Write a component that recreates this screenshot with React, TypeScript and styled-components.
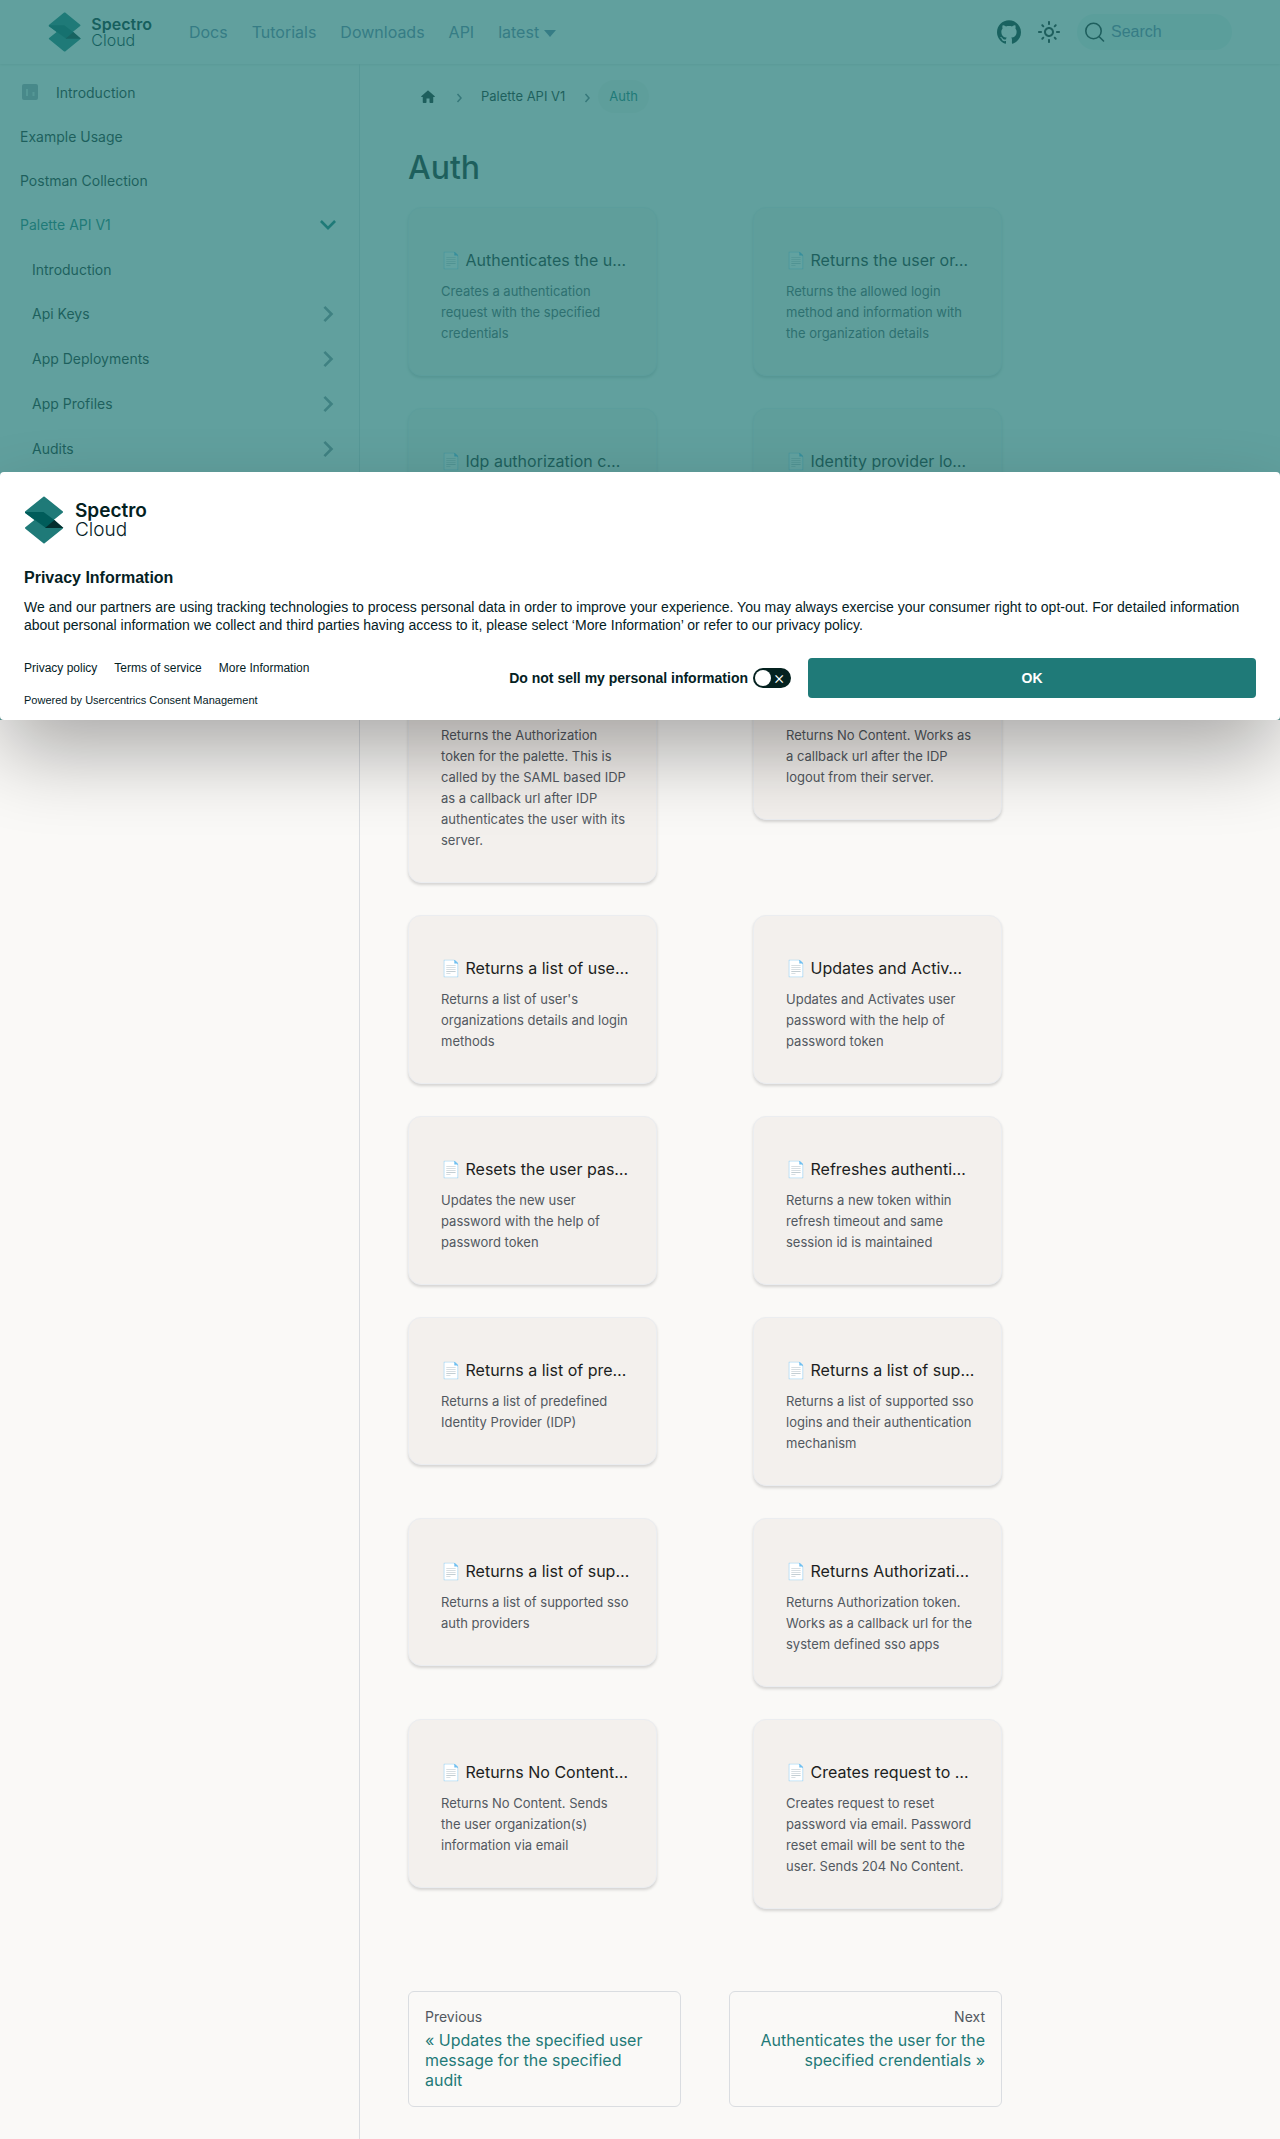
import React from "react";
import styled, { createGlobalStyle } from "styled-components";

const GlobalStyle = createGlobalStyle`
  *, *::before, *::after { box-sizing: border-box; }
  body {
    margin: 0;
    background: #faf9f7;
    color: #1c1e21;
    font-family: Inter, "Open Sans", "Liberation Sans", sans-serif;
    font-size: 16px;
  }
  a { color: inherit; text-decoration: none; }
  h1, h2, p, ul, ol { margin: 0; padding: 0; }
  ul, ol { list-style: none; }
  button { font: inherit; color: inherit; border: 0; background: none; padding: 0; cursor: pointer; }
`;

const Page = styled.div`
  position: relative;
  display: flex;
  flex-direction: column;
`;

const Navbar = styled.header`
  display: flex;
  align-items: center;
  height: 64px;
  padding: 0 48px;
  box-shadow: 0 1px 2px rgba(0, 0, 0, 0.1);
`;

const NavLinks = styled.nav`
  display: flex;
  flex: 1;
  gap: 24px;
  margin-left: 37px;
  color: #6b80a4;
`;

const Dropdown = styled.button`
  display: flex;
  align-items: center;
  gap: 5px;
  &::after {
    content: "";
    margin-top: 3px;
    border: 6px solid transparent;
    border-top: 7px solid currentColor;
    border-bottom: 0;
  }
`;

const NavTools = styled.div`
  display: flex;
  align-items: center;
  gap: 16px;
`;

const IconLink = styled.a`
  display: flex;
`;

const IconButton = styled.button`
  display: flex;
`;

const SearchBox = styled.label`
  display: flex;
  align-items: center;
  gap: 6px;
  width: 155px;
  height: 36px;
  padding: 0 8px;
  border-radius: 18px;
  background: #e6f0ee;
`;

const SearchInput = styled.input`
  flex: 1;
  min-width: 0;
  padding: 0;
  border: 0;
  outline: 0;
  background: none;
  font: 16px "Liberation Sans", Arial, sans-serif;
  &::placeholder { color: #6b80a4; opacity: 1; }
`;

const Brand = styled.a<{ $size: "small" | "large" }>`
  display: flex;
  align-items: center;
  gap: ${(p) => (p.$size === "large" ? 11 : 10)}px;
  color: #04211f;
  font-family: Inter, "Open Sans", sans-serif;
  font-size: ${(p) => (p.$size === "large" ? 19 : 16)}px;
  line-height: ${(p) => (p.$size === "large" ? 19 : 16)}px;
  svg { height: ${(p) => (p.$size === "large" ? 48 : 40)}px; width: auto; }
`;

const BrandText = styled.span`
  display: flex;
  flex-direction: column;
  font-weight: 300;
  strong { font-weight: 600; }
`;

const Body = styled.div`
  display: flex;
`;

const Sidebar = styled.nav`
  flex: 0 0 360px;
  padding: 8px;
  border-right: 1px solid #dadde1;
  font-size: 14px;
`;

const SideItem = styled.li<{ $nested?: boolean }>`
  margin-bottom: 4px;
  padding-left: ${(p) => (p.$nested ? 12 : 0)}px;
`;

const SideLink = styled.a<{ $category?: boolean; $active?: boolean }>`
  display: flex;
  align-items: center;
  justify-content: ${(p) => (p.$category ? "space-between" : "flex-start")};
  gap: 16px;
  height: ${(p) => (p.$category ? 41 : 40)}px;
  padding: 0 7px 0 12px;
  color: ${(p) => (p.$active ? "#1f7a78" : "#1c1e21")};
`;

const Main = styled.main`
  flex: 1;
  min-width: 0;
  padding: 16px 48px 32px;
`;

const Content = styled.div`
  max-width: 594px;
`;

const Crumbs = styled.ol`
  display: flex;
  align-items: center;
  font-size: 13px;
  line-height: 21px;
`;

const Crumb = styled.li<{ $active?: boolean }>`
  display: flex;
  align-items: center;
  > :first-child {
    padding: 6px 11px;
    border-radius: 17px;
    background: ${(p) => (p.$active ? "#f2f0ed" : "none")};
    color: ${(p) => (p.$active ? "#1f7a78" : "inherit")};
  }
  svg { display: block; }
`;

const Title = styled.h1`
  margin: 34px 0 18px;
  font-size: 32px;
  line-height: 42px;
  font-weight: 500;
`;

const CardGrid = styled.section`
  display: grid;
  grid-template-columns: 1fr 1fr;
  gap: 32px 96px;
  align-items: start;
`;

const Card = styled.a`
  display: block;
  min-width: 0;
  padding: 33px 32px 31px;
  border: 1px solid #ebedf0;
  border-radius: 13px;
  background: #f3f0ed;
  box-shadow: 0 2px 3px rgba(0, 0, 0, 0.15);
`;

const CardTitle = styled.h2`
  margin-bottom: 2px;
  font-size: 16px;
  line-height: 38px;
  font-weight: 400;
  white-space: nowrap;
`;

const CardText = styled.p`
  color: #525860;
  font-size: 13px;
  line-height: 21px;
  white-space: pre;
`;

const Pager = styled.nav`
  display: grid;
  grid-template-columns: 1fr 1fr;
  gap: 48px;
  margin-top: 82px;
`;

const PagerLink = styled.a<{ $next?: boolean }>`
  padding: 16px;
  border: 1px solid #dadde1;
  border-radius: 6px;
  color: #1f7a78;
  line-height: 20px;
  text-align: ${(p) => (p.$next ? "right" : "left")};
`;

const PagerHint = styled.div`
  margin-bottom: 4px;
  color: #525860;
  font-size: 14px;
  line-height: 18px;
`;

const Overlay = styled.div`
  position: absolute;
  top: 0;
  left: 0;
  right: 0;
  height: 720px;
  display: flex;
  align-items: flex-end;
  background: rgba(31, 122, 120, 0.7);
`;

const Banner = styled.section`
  width: 100%;
  padding: 24px 24px 12px;
  border-radius: 4px;
  background: #fff;
  box-shadow: rgba(0, 0, 0, 0.32) 0 36px 80px -4px;
  color: #04211f;
  font-family: "Liberation Sans", Arial, sans-serif;
  font-size: 14px;
  line-height: 18px;
`;

const BannerTitle = styled.h2`
  margin: 25px 0 11px;
  font-size: 16px;
  line-height: 18px;
`;

const BannerFooter = styled.div`
  display: flex;
  align-items: flex-start;
  gap: 17px;
  margin-top: 24px;
`;

const Legal = styled.div`
  flex: 1;
  padding-top: 1px;
  font-size: 12px;
`;

const LegalLinks = styled.div`
  display: flex;
  gap: 17px;
`;

const Powered = styled.p`
  margin-top: 15px;
  font-size: 11px;
  line-height: 16px;
`;

const OptOut = styled.label`
  display: flex;
  align-items: center;
  gap: 5px;
  height: 40px;
  font-weight: 700;
`;

const Toggle = styled.input`
  appearance: none;
  position: relative;
  width: 38px;
  height: 20px;
  margin: 0;
  border-radius: 10px;
  background: #04211f;
  &::before {
    content: "";
    position: absolute;
    top: 2px;
    left: 2px;
    width: 16px;
    height: 16px;
    border-radius: 8px;
    background: #fff;
  }
  &::after {
    content: "×";
    position: absolute;
    top: 0;
    right: 6px;
    color: #fff;
    font: 300 18px/20px Inter, sans-serif;
  }
`;

const OkButton = styled.button`
  flex: 0 1 448px;
  height: 40px;
  border-radius: 4px;
  background: #1f7a78;
  color: #fff;
  font-weight: 700;
`;

const LogoMark = () => (
  <svg viewBox="0 0 40 48" aria-hidden="true">
    <g strokeLinejoin="round" strokeWidth="2">
      <path d="M20 17.5 38 32 20 46.5 2 32z" fill="#1f7a78" stroke="#1f7a78" />
      <path d="M20 1.500 38 16 20 30.500 2 16z" fill="#1f7a78" stroke="#1f7a78" />
    </g>
    <path d="M1 16H19.500L31 24.500 22 32 1 17z" fill="#005c5a" />
    <path d="M30.500 24 39.500 32H21z" fill="#042f2e" />
  </svg>
);

const Logo = ({ size }: { size: "small" | "large" }) => (
  <Brand href="#" $size={size}>
    <LogoMark />
    <BrandText>
      <strong>Spectro</strong>
      <span>Cloud</span>
    </BrandText>
  </Brand>
);

const GithubIcon = () => (
  <svg width="24" height="24" viewBox="0 0 24 24" fill="#0b2a29" aria-hidden="true">
    <path d="M12 .297c-6.63 0-12 5.373-12 12 0 5.303 3.438 9.800 8.205 11.385.6.113.82-.258.82-.577 0-.285-.01-1.040-.015-2.040-3.338.724-4.042-1.610-4.042-1.610C4.422 18.070 3.633 17.700 3.633 17.700c-1.087-.744.084-.729.084-.729 1.205.084 1.838 1.236 1.838 1.236 1.070 1.835 2.809 1.305 3.495.998.108-.776.417-1.305.76-1.605-2.665-.3-5.466-1.332-5.466-5.930 0-1.310.465-2.380 1.235-3.220-.135-.303-.54-1.523.105-3.176 0 0 1.005-.322 3.300 1.230.96-.267 1.980-.399 3-.405 1.020.006 2.040.138 3 .405 2.280-1.552 3.285-1.230 3.285-1.230.645 1.653.24 2.873.12 3.176.765.84 1.230 1.910 1.230 3.220 0 4.610-2.805 5.625-5.475 5.920.42.36.81 1.096.81 2.220 0 1.606-.015 2.896-.015 3.286 0 .315.21.69.825.57C20.565 22.092 24 17.592 24 12.297c0-6.627-5.373-12-12-12" />
  </svg>
);

const SunIcon = () => (
  <svg width="24" height="24" viewBox="0 0 24 24" fill="#1c1e21" aria-hidden="true">
    <path d="M12,9c1.65,0,3,1.350,3,3s-1.350,3-3,3s-3-1.350-3-3S10.350,9,12,9 M12,7c-2.760,0-5,2.240-5,5s2.240,5,5,5s5-2.240,5-5 S14.760,7,12,7L12,7z M2,13l2,0c0.550,0,1-0.450,1-1s-0.450-1-1-1l-2,0c-0.550,0-1,0.450-1,1S1.450,13,2,13z M20,13l2,0c0.550,0,1-0.450,1-1 s-0.450-1-1-1l-2,0c-0.550,0-1,0.450-1,1S19.450,13,20,13z M11,2v2c0,0.550,0.450,1,1,1s1-0.450,1-1V2c0-0.550-0.450-1-1-1S11,1.450,11,2z M11,20v2c0,0.550,0.450,1,1,1s1-0.450,1-1v-2c0-0.550-0.450-1-1-1C11.450,19,11,19.450,11,20z M5.990,4.580c-0.390-0.390-1.030-0.390-1.410,0 c-0.390,0.390-0.390,1.030,0,1.410l1.060,1.060c0.390,0.390,1.030,0.390,1.410,0s0.390-1.030,0-1.410L5.990,4.580z M18.360,16.950 c-0.390-0.390-1.030-0.390-1.410,0c-0.390,0.390-0.390,1.030,0,1.410l1.060,1.060c0.390,0.390,1.030,0.390,1.410,0c0.390-0.390,0.390-1.030,0-1.410 L18.360,16.950z M19.420,5.990c0.390-0.390,0.390-1.030,0-1.410c-0.390-0.390-1.030-0.390-1.410,0l-1.060,1.060c-0.390,0.390-0.390,1.030,0,1.410 s1.030,0.390,1.410,0L19.420,5.990z M7.050,18.360c0.390-0.390,0.390-1.030,0-1.410c-0.390-0.390-1.030-0.390-1.410,0l-1.060,1.060 c-0.390,0.390-0.390,1.030,0,1.410s1.030,0.390,1.410,0L7.050,18.360z" />
  </svg>
);

const SearchIcon = () => (
  <svg width="20" height="20" viewBox="0 0 20 20" fill="none" stroke="#1c1e21" strokeWidth="1.600" strokeLinecap="round" aria-hidden="true">
    <circle cx="8.500" cy="9" r="7.700" />
    <path d="m14 14.500 4.500 4.500" />
  </svg>
);

const HomeIcon = () => (
  <svg width="18" height="18" viewBox="0 0 24 24" fill="currentColor" aria-hidden="true">
    <path d="M10 19v-5h4v5c0 .55.45 1 1 1h3c.55 0 1-.45 1-1v-7h1.700c.46 0 .68-.57.33-.87L12.670 3.600c-.38-.34-.96-.34-1.340 0l-8.360 7.530c-.34.3-.13.87.33.87H5v7c0 .55.45 1 1 1h3c.55 0 1-.45 1-1z" />
  </svg>
);

const BoardIcon = () => (
  <svg width="20" height="20" viewBox="0 0 20 20" aria-hidden="true">
    <rect x="2" y="2" width="16" height="16" rx="2" fill="#a9abb4" />
    <path d="M7 7v7M13.500 10v4" stroke="#d4dcdc" strokeWidth="2" />
  </svg>
);

const Caret = ({ open }: { open?: boolean }) => (
  <svg width="32" height="32" viewBox="0 0 24 24" fill={open ? "#1f7a78" : "#8a909c"} aria-hidden="true">
    <path d={open ? "M7.400 8.300 12 12.900l4.600-4.600L18 9.700l-6 6-6-6z" : "M8.600 16.600 13.200 12 8.600 7.400 10 6l6 6-6 6z"} />
  </svg>
);

const Separator = () => (
  <svg width="22" height="24" viewBox="0 0 22 24" fill="none" stroke="#6b7280" strokeWidth="1.500" aria-hidden="true">
    <path d="m9.500 9 3.500 4-3.500 4" />
  </svg>
);

type SideEntry = { label: string; kind?: "category" | "open" | "icon"; nested?: boolean };

const sideEntries: SideEntry[] = [
  { label: "Introduction", kind: "icon" },
  { label: "Example Usage" },
  { label: "Postman Collection" },
  { label: "Palette API V1", kind: "open" },
  { label: "Introduction", nested: true },
  { label: "Api Keys", kind: "category", nested: true },
  { label: "App Deployments", kind: "category", nested: true },
  { label: "App Profiles", kind: "category", nested: true },
  { label: "Audits", kind: "category", nested: true },
];

const cards: [string, string][] = [
  ["Authenticates the u…", "Creates a authentication\nrequest with the specified\ncredentials"],
  ["Returns the user or…", "Returns the allowed login\nmethod and information with\nthe organization details"],
  ["Idp authorization c…", "Returns the Authorization\ntoken for the palette. This is\ncalled by the OIDC based IDP\nas a callback url after the\nuser is authenticated"],
  ["Identity provider lo…", "Returns No Content. Works as\na callback url after the IDP\nlogout from their server."],
  ["Identity provider ca…", "Returns the Authorization\ntoken for the palette. This is\ncalled by the SAML based IDP\nas a callback url after IDP\nauthenticates the user with its\nserver."],
  ["Identity provider lo…", "Returns No Content. Works as\na callback url after the IDP\nlogout from their server."],
  ["Returns a list of use…", "Returns a list of user's\norganizations details and login\nmethods"],
  ["Updates and Activ…", "Updates and Activates user\npassword with the help of\npassword token"],
  ["Resets the user pas…", "Updates the new user\npassword with the help of\npassword token"],
  ["Refreshes authenti…", "Returns a new token within\nrefresh timeout and same\nsession id is maintained"],
  ["Returns a list of pre…", "Returns a list of predefined\nIdentity Provider (IDP)"],
  ["Returns a list of sup…", "Returns a list of supported sso\nlogins and their authentication\nmechanism"],
  ["Returns a list of sup…", "Returns a list of supported sso\nauth providers"],
  ["Returns Authorizati…", "Returns Authorization token.\nWorks as a callback url for the\nsystem defined sso apps"],
  ["Returns No Content…", "Returns No Content. Sends\nthe user organization(s)\ninformation via email"],
  ["Creates request to …", "Creates request to reset\npassword via email. Password\nreset email will be sent to the\nuser. Sends 204 No Content."],
];

export default function App() {
  return (
    <Page>
      <GlobalStyle />
      <Navbar>
        <Logo size="small" />
        <NavLinks aria-label="Main">
          <a href="#">Docs</a>
          <a href="#">Tutorials</a>
          <a href="#">Downloads</a>
          <a href="#">API</a>
          <Dropdown type="button">latest</Dropdown>
        </NavLinks>
        <NavTools>
          <IconLink href="#" aria-label="GitHub"><GithubIcon /></IconLink>
          <IconButton type="button" aria-label="Switch theme"><SunIcon /></IconButton>
          <SearchBox>
            <SearchIcon />
            <SearchInput type="search" placeholder="Search" aria-label="Search" />
          </SearchBox>
        </NavTools>
      </Navbar>

      <Body>
        <Sidebar aria-label="Docs sidebar">
          <ul>
            {sideEntries.map(({ label, kind, nested }, i) => {
              const category = kind === "category" || kind === "open";
              return (
                <SideItem key={i} $nested={nested}>
                  <SideLink href="#" $category={category} $active={kind === "open"}>
                    {kind === "icon" && <BoardIcon />}
                    {label}
                    {category && <Caret open={kind === "open"} />}
                  </SideLink>
                </SideItem>
              );
            })}
          </ul>
        </Sidebar>

        <Main>
          <Content>
            <nav aria-label="Breadcrumbs">
              <Crumbs>
                <Crumb><a href="#" aria-label="Home page"><HomeIcon /></a><Separator /></Crumb>
                <Crumb><a href="#">Palette API V1</a><Separator /></Crumb>
                <Crumb $active><span>Auth</span></Crumb>
              </Crumbs>
            </nav>
            <Title>Auth</Title>
            <CardGrid>
              {cards.map(([title, text], i) => (
                <Card href="#" key={i}>
                  <CardTitle>📄️ {title}</CardTitle>
                  <CardText>{text}</CardText>
                </Card>
              ))}
            </CardGrid>
            <Pager aria-label="Docs pages">
              <PagerLink href="#">
                <PagerHint>Previous</PagerHint>
                « Updates the specified user message for the specified
                <br />
                audit
              </PagerLink>
              <PagerLink href="#" $next>
                <PagerHint>Next</PagerHint>
                Authenticates the user for the specified crendentials »
              </PagerLink>
            </Pager>
          </Content>
        </Main>
      </Body>

      <Overlay>
        <Banner role="dialog" aria-label="Privacy Information">
          <Logo size="large" />
          <BannerTitle>Privacy Information</BannerTitle>
          <p>
            We and our partners are using tracking technologies to process personal data in order to improve your
            experience. You may always exercise your consumer right to opt-out. For detailed information about personal
            information we collect and third parties having access to it, please select ‘More Information’ or refer to
            our privacy policy.
          </p>
          <BannerFooter>
            <Legal>
              <LegalLinks>
                <a href="#">Privacy policy</a>
                <a href="#">Terms of service</a>
                <a href="#">More Information</a>
              </LegalLinks>
              <Powered>Powered by <a href="#">Usercentrics Consent Management</a></Powered>
            </Legal>
            <OptOut>
              Do not sell my personal information
              <Toggle type="checkbox" />
            </OptOut>
            <OkButton type="button">OK</OkButton>
          </BannerFooter>
        </Banner>
      </Overlay>
    </Page>
  );
}
